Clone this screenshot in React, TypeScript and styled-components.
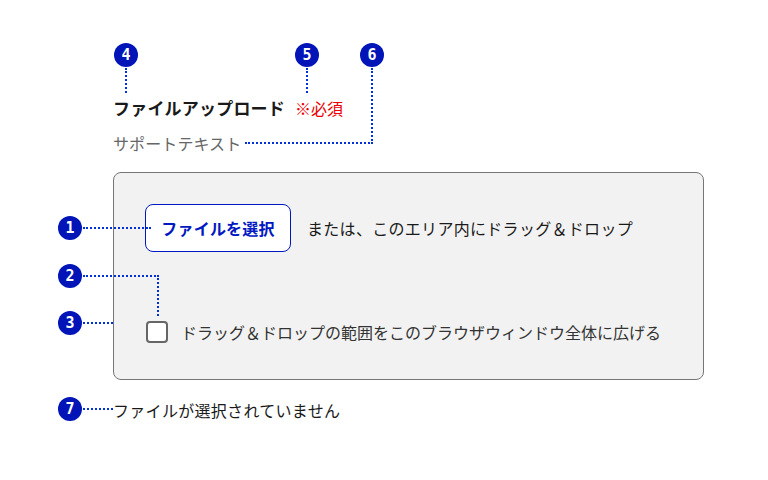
import React from 'react';
import styled, { createGlobalStyle } from 'styled-components';

const GlobalStyle = createGlobalStyle`
	html, body {
		margin: 0;
		padding: 0;
		background: #fff;
	}
	body {
		font-family: 'Noto Sans CJK JP', 'Noto Sans', sans-serif;
		color: #1a1a1a;
	}
`;

const Canvas = styled.div`
	position: relative;
	width: 768px;
	height: 480px;
	overflow: hidden;
	background: #fff;
`;

const Field = styled.div`
	display: flex;
	flex-direction: column;
	padding: 96px 0 0 113px;
	width: 591px;
`;

const LabelRow = styled.div`
	display: flex;
	align-items: baseline;
	gap: 10px;
	line-height: 24px;
`;

const Title = styled.span`
	font-size: 17px;
	font-weight: 700;
	letter-spacing: 0.2px;
	color: #1a1a1a;
`;

const Required = styled.span`
	font-size: 16px;
	color: #ec0000;
`;

const Support = styled.div`
	margin-top: 11px;
	font-size: 16px;
	line-height: 24px;
	letter-spacing: 0.1px;
	color: #666;
`;

const DropZone = styled.div`
	margin-top: 17px;
	box-sizing: border-box;
	height: 208px;
	padding: 31px 31px 0;
	border: 1px solid #767676;
	border-radius: 8px;
	background: #f2f2f2;
	display: flex;
	flex-direction: column;
	gap: 68px;
`;

const PickRow = styled.div`
	display: flex;
	align-items: center;
	gap: 16px;
`;

const PickButton = styled.button`
	box-sizing: border-box;
	height: 48px;
	width: 146px;
	padding: 0;
	border: 1px solid #0017c1;
	border-radius: 8px;
	background: #fff;
	color: #0017c1;
	font-family: inherit;
	font-size: 16px;
	font-weight: 700;
	letter-spacing: 0.2px;
	cursor: pointer;
`;

const Hint = styled.span`
	font-size: 16px;
	letter-spacing: 0.3px;
	color: #1a1a1a;
`;

const CheckRow = styled.label`
	display: flex;
	align-items: center;
	gap: 13px;
	padding-left: 1px;
	font-size: 16px;
	color: #333;
`;

const Box = styled.span`
	box-sizing: border-box;
	width: 22px;
	height: 22px;
	border: 2px solid #666;
	border-radius: 4px;
	background: #fff;
`;

const Status = styled.div`
	margin-top: 18px;
	font-size: 16px;
	line-height: 24px;
	letter-spacing: 0.3px;
	color: #1a1a1a;
`;

// numbered callouts over the form
const Marker = styled.div<{ $x: number; $y: number }>`
	position: absolute;
	left: ${(p) => p.$x - 12}px;
	top: ${(p) => p.$y - 12}px;
	width: 24px;
	height: 24px;
	border-radius: 50%;
	background: #0014b8;
	color: #fff;
	display: flex;
	align-items: center;
	justify-content: center;
	font-family: 'DejaVu Sans Mono', monospace;
	font-size: 15px;
	font-weight: 700;
`;

const Leader = styled.div<{
	$x: number;
	$y: number;
	$w: number;
	$h: number;
	$sides: string;
}>`
	position: absolute;
	box-sizing: border-box;
	left: ${(p) => p.$x}px;
	top: ${(p) => p.$y}px;
	width: ${(p) => p.$w}px;
	height: ${(p) => p.$h}px;
	${(p) =>
		p.$sides
			.split(' ')
			.map((s) => `border-${s}: 2px dotted #0031d8;`)
			.join('\n')}
`;

const markers = [
	{ n: 1, x: 70, y: 228 },
	{ n: 2, x: 70, y: 276 },
	{ n: 3, x: 70, y: 323 },
	{ n: 4, x: 126, y: 55 },
	{ n: 5, x: 307, y: 55 },
	{ n: 6, x: 372, y: 55 },
	{ n: 7, x: 70, y: 409 },
];

const leaders = [
	{ x: 83, y: 227, w: 68, h: 2, sides: 'top' },
	{ x: 83, y: 275, w: 76, h: 41, sides: 'top right' },
	{ x: 83, y: 322, w: 30, h: 2, sides: 'top' },
	{ x: 125, y: 68, w: 2, h: 25, sides: 'left' },
	{ x: 306, y: 68, w: 2, h: 25, sides: 'left' },
	{ x: 245, y: 68, w: 128, h: 76, sides: 'right bottom' },
	{ x: 83, y: 408, w: 30, h: 2, sides: 'top' },
];

export default function App() {
	return (
		<Canvas>
			<GlobalStyle />
			<Field>
				<LabelRow>
					<Title>ファイルアップロード</Title>
					<Required>※必須</Required>
				</LabelRow>
				<Support>サポートテキスト</Support>
				<DropZone>
					<PickRow>
						<PickButton type="button">ファイルを選択</PickButton>
						<Hint>または、このエリア内にドラッグ＆ドロップ</Hint>
					</PickRow>
					<CheckRow>
						<Box />
						ドラッグ＆ドロップの範囲をこのブラウザウィンドウ全体に広げる
					</CheckRow>
				</DropZone>
				<Status>ファイルが選択されていません</Status>
			</Field>
			{leaders.map((l, i) => (
				<Leader key={i} $x={l.x} $y={l.y} $w={l.w} $h={l.h} $sides={l.sides} />
			))}
			{markers.map((m) => (
				<Marker key={m.n} $x={m.x} $y={m.y}>
					{m.n}
				</Marker>
			))}
		</Canvas>
	);
}
